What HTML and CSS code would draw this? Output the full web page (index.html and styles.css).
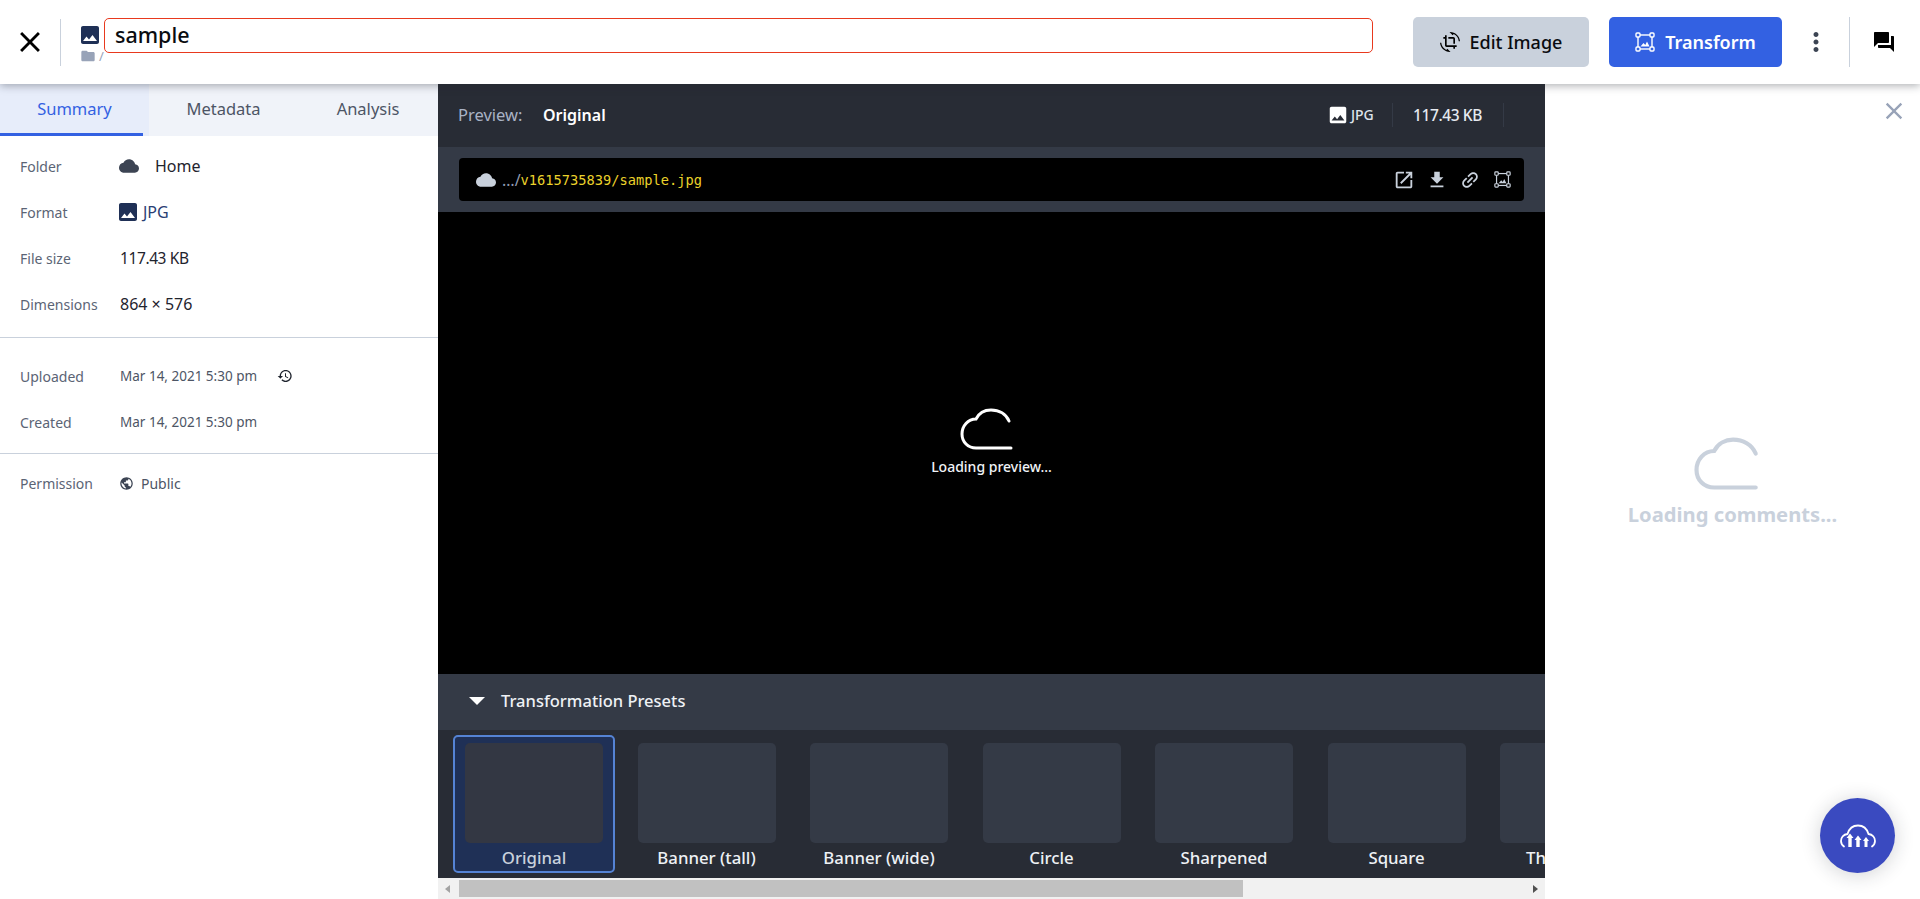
FILE: index.html
```html
<!DOCTYPE html>
<html lang="en">
<head>
    <meta charset="UTF-8">
    <title>sample</title>
    <link rel="stylesheet" href="styles.css">
</head>
<body>
    <header class="topbar">
        <button class="close-btn">
            <svg width="34" height="34" viewBox="0 0 24 24"><path d="M19 6.41L17.59 5 12 10.59 6.41 5 5 6.41 10.59 12 5 17.59 6.41 19 12 13.41 17.59 19 19 17.59 13.41 12z"/></svg>
        </button>
        <div class="asset-title">
            <div class="asset-icons">
                <svg class="icon-navy" width="24" height="24" viewBox="0 0 24 24"><path d="M21 19V5c0-1.1-.9-2-2-2H5c-1.1 0-2 .9-2 2v14c0 1.1.9 2 2 2h14c1.100 0 2-.9 2-2zM8.500 13.500l2.500 3.010L14.500 12l4.500 6H5l3.500-4.500z"/></svg>
                <div class="asset-path">
                    <svg width="16" height="16" viewBox="0 0 24 24"><path d="M10 4H4c-1.100 0-1.990.9-1.990 2L2 18c0 1.100.9 2 2 2h16c1.100 0 2-.9 2-2V8c0-1.100-.9-2-2-2h-8l-2-2z"/></svg>
                    <span>/</span>
                </div>
            </div>
            <div class="name-input">sample</div>
        </div>
        <button class="btn btn-edit">
            <svg width="20" height="20" viewBox="0 0 24 24"><path d="M7.470 21.490C4.200 19.930 1.860 16.760 1.500 13H0c.51 6.160 5.660 11 11.950 11 .23 0 .44-.02.66-.03L8.800 20.150l-1.330 1.340zM12.050 0c-.23 0-.44.02-.66.04l3.810 3.810 1.330-1.330C19.800 4.070 22.140 7.240 22.500 11H24c-.51-6.160-5.660-11-11.950-11zM16 14h2V8c0-1.110-.9-2-2-2h-6v2h6v6zm-8 2V4H6v2H4v2h2v8c0 1.100.89 2 2 2h8v2h2v-2h2v-2H8z"/></svg>
            Edit Image
        </button>
        <button class="btn btn-primary">
            <svg class="transform-icon" width="20" height="20" viewBox="0 0 20 20"><rect x="3" y="3" width="14" height="14"/><rect class="handle" x="1" y="1" width="4" height="4" rx="1"/><rect class="handle" x="15" y="1" width="4" height="4" rx="1"/><rect class="handle" x="1" y="15" width="4" height="4" rx="1"/><rect class="handle" x="15" y="15" width="4" height="4" rx="1"/><path class="mount" d="M5.500 14.500l3-3.500 1.800 2 1.700-3.500 2.500 5z"/></svg>
            Transform
        </button>
        <button class="more-btn">
            <svg width="30" height="30" viewBox="0 0 24 24"><path d="M12 8c1.100 0 2-.9 2-2s-.9-2-2-2-2 .9-2 2 .9 2 2 2zm0 2c-1.100 0-2 .9-2 2s.9 2 2 2 2-.9 2-2-.9-2-2-2zm0 6c-1.100 0-2 .9-2 2s.9 2 2 2 2-.9 2-2-.9-2-2-2z"/></svg>
        </button>
        <button class="chat-btn">
            <svg width="24" height="24" viewBox="0 0 24 24"><path d="M21 6h-2v9H6v2c0 .55.45 1 1 1h11l4 4V7c0-.55-.45-1-1-1zm-4 6V3c0-.55-.45-1-1-1H3c-.55 0-1 .45-1 1v14l4-4h10c.55 0 1-.45 1-1z"/></svg>
        </button>
    </header>

    <div class="workspace">
        <aside class="sidebar">
            <nav class="tabs">
                <a class="tab active">Summary</a>
                <a class="tab">Metadata</a>
                <a class="tab">Analysis</a>
            </nav>
            <section class="info-group first">
                <div class="info-row">
                    <span class="info-label">Folder</span>
                    <span class="info-value">
                        <svg class="icon-slate folder-cloud" width="24" height="24" viewBox="0 0 24 24"><path d="M19.350 10.040C18.670 6.590 15.640 4 12 4 9.110 4 6.600 5.640 5.350 8.040 2.340 8.360 0 10.910 0 14c0 3.310 2.690 6 6 6h13c2.760 0 5-2.240 5-5 0-2.640-2.050-4.780-4.650-4.960z"/></svg>
                        Home
                    </span>
                </div>
                <div class="info-row">
                    <span class="info-label">Format</span>
                    <span class="info-value format-value">
                        <svg class="icon-navy" width="24" height="24" viewBox="0 0 24 24"><path d="M21 19V5c0-1.100-.9-2-2-2H5c-1.100 0-2 .9-2 2v14c0 1.100.9 2 2 2h14c1.100 0 2-.9 2-2zM8.500 13.500l2.500 3.010L14.500 12l4.500 6H5l3.500-4.500z"/></svg>
                        JPG
                    </span>
                </div>
                <div class="info-row">
                    <span class="info-label">File size</span>
                    <span class="info-value size-value">117.43 KB</span>
                </div>
                <div class="info-row">
                    <span class="info-label">Dimensions</span>
                    <span class="info-value">864 × 576</span>
                </div>
            </section>
            <section class="info-group dates">
                <div class="info-row">
                    <span class="info-label">Uploaded</span>
                    <span class="info-value small">
                        Mar 14, 2021 5:30 pm
                        <svg class="history" width="16" height="16" viewBox="0 0 24 24"><path d="M13 3c-4.970 0-9 4.030-9 9H1l3.890 3.890.07.14L9 12H6c0-3.870 3.130-7 7-7s7 3.130 7 7-3.130 7-7 7c-1.930 0-3.680-.79-4.940-2.060l-1.420 1.420C8.270 19.990 10.510 21 13 21c4.970 0 9-4.030 9-9s-4.030-9-9-9zm-1 5v5l4.280 2.540.72-1.210-3.500-2.080V8h-1.500z"/></svg>
                    </span>
                </div>
                <div class="info-row">
                    <span class="info-label">Created</span>
                    <span class="info-value small">Mar 14, 2021 5:30 pm</span>
                </div>
            </section>
            <section class="info-group last">
                <div class="info-row">
                    <span class="info-label">Permission</span>
                    <span class="info-value small public-value">
                        <svg class="icon-slate globe" width="15" height="15" viewBox="0 0 24 24"><path d="M12 2C6.480 2 2 6.480 2 12s4.480 10 10 10 10-4.480 10-10S17.520 2 12 2zm-1 17.930c-3.950-.49-7-3.850-7-7.930 0-.62.08-1.210.21-1.790L9 15v1c0 1.100.9 2 2 2v1.930zm6.900-2.540c-.26-.81-1-1.390-1.900-1.390h-1v-3c0-.55-.45-1-1-1H8v-2h2c.55 0 1-.45 1-1V7h2c1.100 0 2-.9 2-2v-.41c2.930 1.190 5 4.060 5 7.410 0 2.080-.8 3.970-2.100 5.390z"/></svg>
                        Public
                    </span>
                </div>
            </section>
        </aside>

        <main class="preview">
            <div class="preview-head">
                <span class="preview-label">Preview:</span>
                <span class="preview-name">Original</span>
                <span class="preview-format">
                    <svg width="22" height="22" viewBox="0 0 24 24"><path d="M21 19V5c0-1.100-.9-2-2-2H5c-1.100 0-2 .9-2 2v14c0 1.100.9 2 2 2h14c1.100 0 2-.9 2-2zM8.500 13.500l2.500 3.010L14.500 12l4.500 6H5l3.500-4.500z"/></svg>
                    JPG
                </span>
                <span class="preview-size">117.43 KB</span>
            </div>
            <div class="url-band">
                <div class="url-bar">
                    <svg class="url-cloud" width="20" height="20" viewBox="0 0 24 24"><path d="M19.350 10.040C18.670 6.590 15.640 4 12 4 9.110 4 6.600 5.640 5.350 8.040 2.340 8.360 0 10.910 0 14c0 3.310 2.690 6 6 6h13c2.760 0 5-2.240 5-5 0-2.640-2.050-4.780-4.650-4.960z"/></svg>
                    <span class="url-dim">…/</span><span class="url-text">v1615735839/sample.jpg</span>
                    <div class="url-actions">
                        <svg width="22" height="22" viewBox="0 0 24 24"><path d="M19 19H5V5h7V3H5c-1.110 0-2 .9-2 2v14c0 1.100.89 2 2 2h14c1.100 0 2-.9 2-2v-7h-2v7zM14 3v2h3.590l-9.830 9.830 1.410 1.410L19 6.410V10h2V3h-7z"/></svg>
                        <svg width="22" height="22" viewBox="0 0 24 24"><path d="M19 9h-4V3H9v6H5l7 7 7-7zM5 18v2h14v-2H5z"/></svg>
                        <svg class="link-icon" width="22" height="22" viewBox="0 0 24 24"><path d="M3.900 12c0-1.710 1.390-3.100 3.100-3.100h4V7H7c-2.760 0-5 2.240-5 5s2.240 5 5 5h4v-1.900H7c-1.710 0-3.100-1.390-3.100-3.100zM8 13h8v-2H8v2zm9-6h-4v1.900h4c1.710 0 3.100 1.390 3.100 3.100s-1.390 3.100-3.100 3.100h-4V17h4c2.760 0 5-2.240 5-5s-2.240-5-5-5z"/></svg>
                        <svg class="transform-icon" width="17" height="17" viewBox="0 0 20 20"><rect x="3" y="3" width="14" height="14"/><rect class="handle" x="1" y="1" width="4" height="4" rx="1"/><rect class="handle" x="15" y="1" width="4" height="4" rx="1"/><rect class="handle" x="1" y="15" width="4" height="4" rx="1"/><rect class="handle" x="15" y="15" width="4" height="4" rx="1"/><path class="mount" d="M5.500 14.500l3-3.500 1.800 2 1.700-3.500 2.500 5z"/></svg>
                    </div>
                </div>
            </div>
            <div class="stage">
                <svg class="loader-cloud" width="54" height="42" viewBox="0 0 54 42"><path d="M49 13C46 6 39 2 31 2 25 2 19 5 16 11 8 11 2 18 2 26 2 34 8 40 16 40H51"/></svg>
                <div class="loader-text">Loading preview...</div>
            </div>
            <div class="presets-head">
                <span class="caret"></span>
                Transformation Presets
            </div>
            <div class="presets">
                <div class="preset selected"><div class="thumb"></div><span>Original</span></div>
                <div class="preset"><div class="thumb"></div><span>Banner (tall)</span></div>
                <div class="preset"><div class="thumb"></div><span>Banner (wide)</span></div>
                <div class="preset"><div class="thumb"></div><span>Circle</span></div>
                <div class="preset"><div class="thumb"></div><span>Sharpened</span></div>
                <div class="preset"><div class="thumb"></div><span>Square</span></div>
                <div class="preset"><div class="thumb"></div><span>Thumbnail</span></div>
            </div>
            <div class="scrollbar">
                <span class="arrow left"></span>
                <div class="scroll-track"><div class="scroll-thumb"></div></div>
                <span class="arrow right"></span>
            </div>
        </main>

        <aside class="comments">
            <div class="comments-top">
                <svg width="28" height="28" viewBox="0 0 24 24"><path d="M19 6.410L17.590 5 12 10.590 6.410 5 5 6.410 10.590 12 5 17.590 6.410 19 12 13.410 17.590 19 19 17.590 13.410 12z"/></svg>
            </div>
            <div class="comments-body">
                <svg class="comments-cloud" width="68" height="57" viewBox="0 0 54 45"><path d="M49 13C46 6 39 2 31 2 25 2 19 5 16 11 8 11 2 18 2 26 2 34 8 40 16 40H49"/></svg>
                <div class="comments-text">Loading comments...</div>
            </div>
        </aside>
    </div>

    <button class="fab">
        <svg width="36" height="24" viewBox="0 0 36 24"><path class="fab-cloud" d="M4 22.500C2 21 1 19 1 17 1 13.500 3.500 10.500 7.500 10 9 5 13 1.500 18 1.500 23 1.500 27 5 28.500 10 32.500 10.500 35 13.500 35 17 35 19 34 21 32 22.500"/><path class="fab-arrows" d="M10 9.500l3.500 4.500H11.700V23H8.300V14H6.500zM18 11.500l3.500 4.500H19.700V23H16.300V16H14.500zM26 13l3 4H27.500V23H24.500V17H23z"/></svg>
    </button>
</body>
</html>
```

FILE: styles.css
```css
* {
    box-sizing: border-box;
}
body {
    margin: 0;
    height: 899px;
    overflow: hidden;
    font-family: 'Noto Sans', sans-serif;
    background: #ffffff;
    color: #1f242e;
    display: flex;
    flex-direction: column;
}
button {
    font-family: inherit;
    border: none;
    background: none;
    padding: 0;
    cursor: pointer;
}
svg {
    display: block;
    flex-shrink: 0;
}

/* top bar */
.topbar {
    height: 84px;
    flex-shrink: 0;
    display: flex;
    align-items: center;
    background: #ffffff;
    box-shadow: 0 2px 8px rgba(31, 36, 46, 0.35);
    position: relative;
    z-index: 2;
}
.close-btn {
    width: 61px;
    height: 47px;
    padding-left: 13px;
    border-right: 1px solid #c9d1dc;
    margin-right: 17px;
}
.asset-title {
    flex: 1;
    display: flex;
    align-self: flex-start;
    margin-top: 18px;
    margin-right: 40px;
}
.asset-icons {
    width: 26px;
}
.asset-icons > svg {
    margin-top: 5px;
}
.icon-navy {
    fill: #1f3056;
}
.icon-slate {
    fill: #3c4453;
}
.asset-path {
    display: flex;
    align-items: center;
    margin-top: 1px;
    color: #98a3b8;
    font-size: 13px;
    line-height: 14px;
    fill: #98a3b8;
}
.asset-path svg {
    margin: 0 3px 0 2px;
}
.name-input {
    flex: 1;
    height: 35px;
    border: 1px solid #e8391e;
    border-radius: 5px;
    padding-left: 10px;
    font-size: 21.500px;
    line-height: 32px;
    font-weight: 500;
    color: #0a0c10;
}
.btn {
    height: 50px;
    border-radius: 5px;
    display: flex;
    align-items: center;
    justify-content: center;
    gap: 10px;
    font-size: 18px;
    font-weight: 500;
}
.btn-edit {
    width: 176px;
    background: #c9d1dc;
    color: #0a0c10;
    margin-right: 20px;
}
.btn-primary {
    width: 173px;
    background: #3361e2;
    color: #ffffff;
    font-weight: 600;
}
.transform-icon {
    fill: none;
    stroke: #ffffff;
    stroke-width: 1.400;
}
.transform-icon .handle {
    fill: #3361e2;
}
.transform-icon .mount {
    fill: #ffffff;
    stroke: none;
}
.more-btn {
    width: 30px;
    height: 30px;
    margin: 0 18px 0 19px;
    fill: #3c4453;
}
.chat-btn {
    height: 50px;
    width: 71px;
    border-left: 1px solid #c9d1dc;
    display: flex;
    align-items: center;
    padding-left: 22px;
}

/* layout */
.workspace {
    flex: 1;
    display: flex;
    min-height: 0;
}

/* left panel */
.sidebar {
    width: 438px;
    flex-shrink: 0;
}
.tabs {
    display: flex;
    height: 52px;
    background: #f0f3f9;
}
.tab {
    width: 149px;
    height: 52px;
    text-align: center;
    font-size: 16.500px;
    line-height: 49px;
    color: #4d5565;
}
.tab:nth-child(3) {
    width: 140px;
}
.tab.active {
    color: #3361e2;
    background: #e7edfa;
}
.tab.active::after {
    content: '';
    display: block;
    width: 143px;
    height: 3px;
    background: #3361e2;
}
.info-group {
    padding: 0 20px;
}
.info-group.first {
    padding-top: 7px;
    padding-bottom: 10px;
    border-bottom: 1px solid #c9d1dc;
}
.info-group.dates {
    padding-top: 15px;
    padding-bottom: 8px;
    border-bottom: 1px solid #c9d1dc;
}
.info-group.last {
    padding-top: 6px;
}
.info-row {
    height: 46px;
    display: flex;
    align-items: center;
}
.info-label {
    width: 100px;
    font-size: 14px;
    color: #5b6475;
}
.info-value {
    display: flex;
    align-items: center;
    font-size: 16px;
    color: #1f242e;
}
.size-value {
    font-size: 15.500px;
    letter-spacing: -0.4px;
}
.info-value.small {
    font-size: 13.500px;
    color: #4d5565;
}
.info-value.public-value {
    font-size: 14px;
}
.folder-cloud {
    width: 20px;
    height: 20px;
    margin: 0 16px 0 -1px;
}
.format-value {
    color: #2a4073;
}
.format-value svg {
    margin-left: -4px;
    margin-right: 3px;
}
.history {
    margin-left: 20px;
    fill: #1f242e;
}
.globe {
    margin-left: -1px;
    margin-right: 7px;
}

/* preview column */
.preview {
    width: 1107px;
    flex-shrink: 0;
    display: flex;
    flex-direction: column;
    background: #282c35;
}
.preview-head {
    height: 63px;
    display: flex;
    align-items: center;
    padding: 0 0 2px 20px;
    font-size: 16px;
}
.preview-label {
    color: #a9b3c5;
    width: 85px;
    font-size: 16.500px;
}
.preview-name {
    color: #ffffff;
    font-weight: 600;
}
.preview-format {
    margin-left: auto;
    display: flex;
    align-items: center;
    gap: 2px;
    width: 66px;
    height: 24px;
    font-size: 14px;
    font-weight: 500;
    color: #dfe4ec;
    fill: #ffffff;
    border-right: 1px solid #343a46;
}
.preview-size {
    width: 111px;
    height: 24px;
    line-height: 24px;
    margin-right: 41px;
    padding-left: 20px;
    font-size: 15.500px;
    letter-spacing: -0.4px;
    color: #e6eaf0;
    font-weight: 500;
    border-right: 1px solid #343a46;
}
.url-band {
    height: 65px;
    padding: 11px 21px;
    background: #343a46;
}
.url-bar {
    height: 43px;
    background: #000000;
    border-radius: 4px;
    display: flex;
    align-items: center;
    padding: 0 13px 0 17px;
}
.url-cloud {
    fill: #c9d1dc;
    margin-right: 6px;
}
.url-dim {
    color: #8f9ab0;
    font-size: 16px;
}
.url-text {
    font-family: 'DejaVu Sans Mono', monospace;
    font-size: 13.700px;
    color: #ebd22b;
}
.url-actions {
    margin-left: auto;
    display: flex;
    align-items: center;
    gap: 11px;
    fill: #c9d1dc;
}
.url-actions .transform-icon {
    stroke: #c9d1dc;
    margin-left: 2px;
}
.url-actions .transform-icon .handle {
    fill: #000000;
}
.url-actions .transform-icon .mount {
    fill: #c9d1dc;
}
.link-icon {
    transform: rotate(-45deg);
}
.stage {
    height: 462px;
    background: #000000;
    display: flex;
    flex-direction: column;
    align-items: center;
    padding-top: 196px;
}
.loader-cloud {
    fill: none;
    stroke: #ffffff;
    stroke-width: 3;
    stroke-linecap: round;
    margin-right: 9px;
}
.loader-text {
    margin-top: 7px;
    font-size: 14px;
    font-weight: 500;
    color: #f0f3f7;
}
.presets-head {
    height: 56px;
    flex-shrink: 0;
    background: #343a46;
    display: flex;
    align-items: center;
    padding: 0 0 4px 31px;
    font-size: 16.500px;
    font-weight: 500;
    color: #eef1f5;
}
.caret {
    width: 0;
    height: 0;
    border-left: 8px solid transparent;
    border-right: 8px solid transparent;
    border-top: 8px solid #ffffff;
    margin-right: 16px;
    margin-top: 2px;
}
.presets {
    height: 148px;
    flex-shrink: 0;
    display: flex;
    gap: 10.500px;
    padding: 5px 0 0 15px;
    overflow: hidden;
}
.preset {
    width: 162px;
    height: 138px;
    flex-shrink: 0;
    padding: 6px 10px 0;
    border: 2px solid transparent;
    border-radius: 5px;
    text-align: center;
    font-size: 16.800px;
    font-weight: 500;
    white-space: nowrap;
    color: #eef1f5;
}
.preset .thumb {
    height: 100px;
    border-radius: 5px;
    background: #343a46;
    margin-bottom: 3px;
}
.preset.selected {
    background: #1f3056;
    border-color: #5583d4;
    color: #c9d1dc;
}
.preset.selected .thumb {
    background: #333743;
}
.scrollbar {
    height: 21px;
    flex-shrink: 0;
    background: #f1f1f1;
    display: flex;
    align-items: center;
}
.arrow {
    width: 0;
    height: 0;
    border-top: 4px solid transparent;
    border-bottom: 4px solid transparent;
}
.arrow.left {
    border-right: 5px solid #a3a3a3;
    margin: 0 9px 0 7px;
}
.arrow.right {
    border-left: 5px solid #505050;
    margin: 0 7px 0 9px;
}
.scroll-track {
    flex: 1;
}
.scroll-thumb {
    width: 784px;
    height: 17px;
    background: #c1c1c1;
}

/* right panel */
.comments {
    flex: 1;
    display: flex;
    flex-direction: column;
}
.comments-top {
    display: flex;
    justify-content: flex-end;
    padding: 13px 12px 0 0;
    fill: #98a3b8;
}
.comments-body {
    display: flex;
    flex-direction: column;
    align-items: center;
    padding-top: 312px;
}
.comments-cloud {
    fill: none;
    stroke: #c9d1dc;
    stroke-width: 3.300;
    stroke-linecap: round;
    margin-right: 10px;
}
.comments-text {
    margin-top: 6px;
    font-size: 20.200px;
    font-weight: 700;
    color: #c9d1dc;
}

/* floating logo button */
.fab {
    position: absolute;
    left: 1820px;
    top: 798px;
    width: 75px;
    height: 75px;
    border-radius: 50%;
    background: #3a4ac0;
    box-shadow: 0 2px 20px rgba(31, 36, 46, 0.2);
    display: flex;
    align-items: center;
    justify-content: center;
}
.fab-cloud {
    fill: none;
    stroke: #ffffff;
    stroke-width: 1.800;
    stroke-linecap: round;
}
.fab-arrows {
    fill: #ffffff;
}
```
